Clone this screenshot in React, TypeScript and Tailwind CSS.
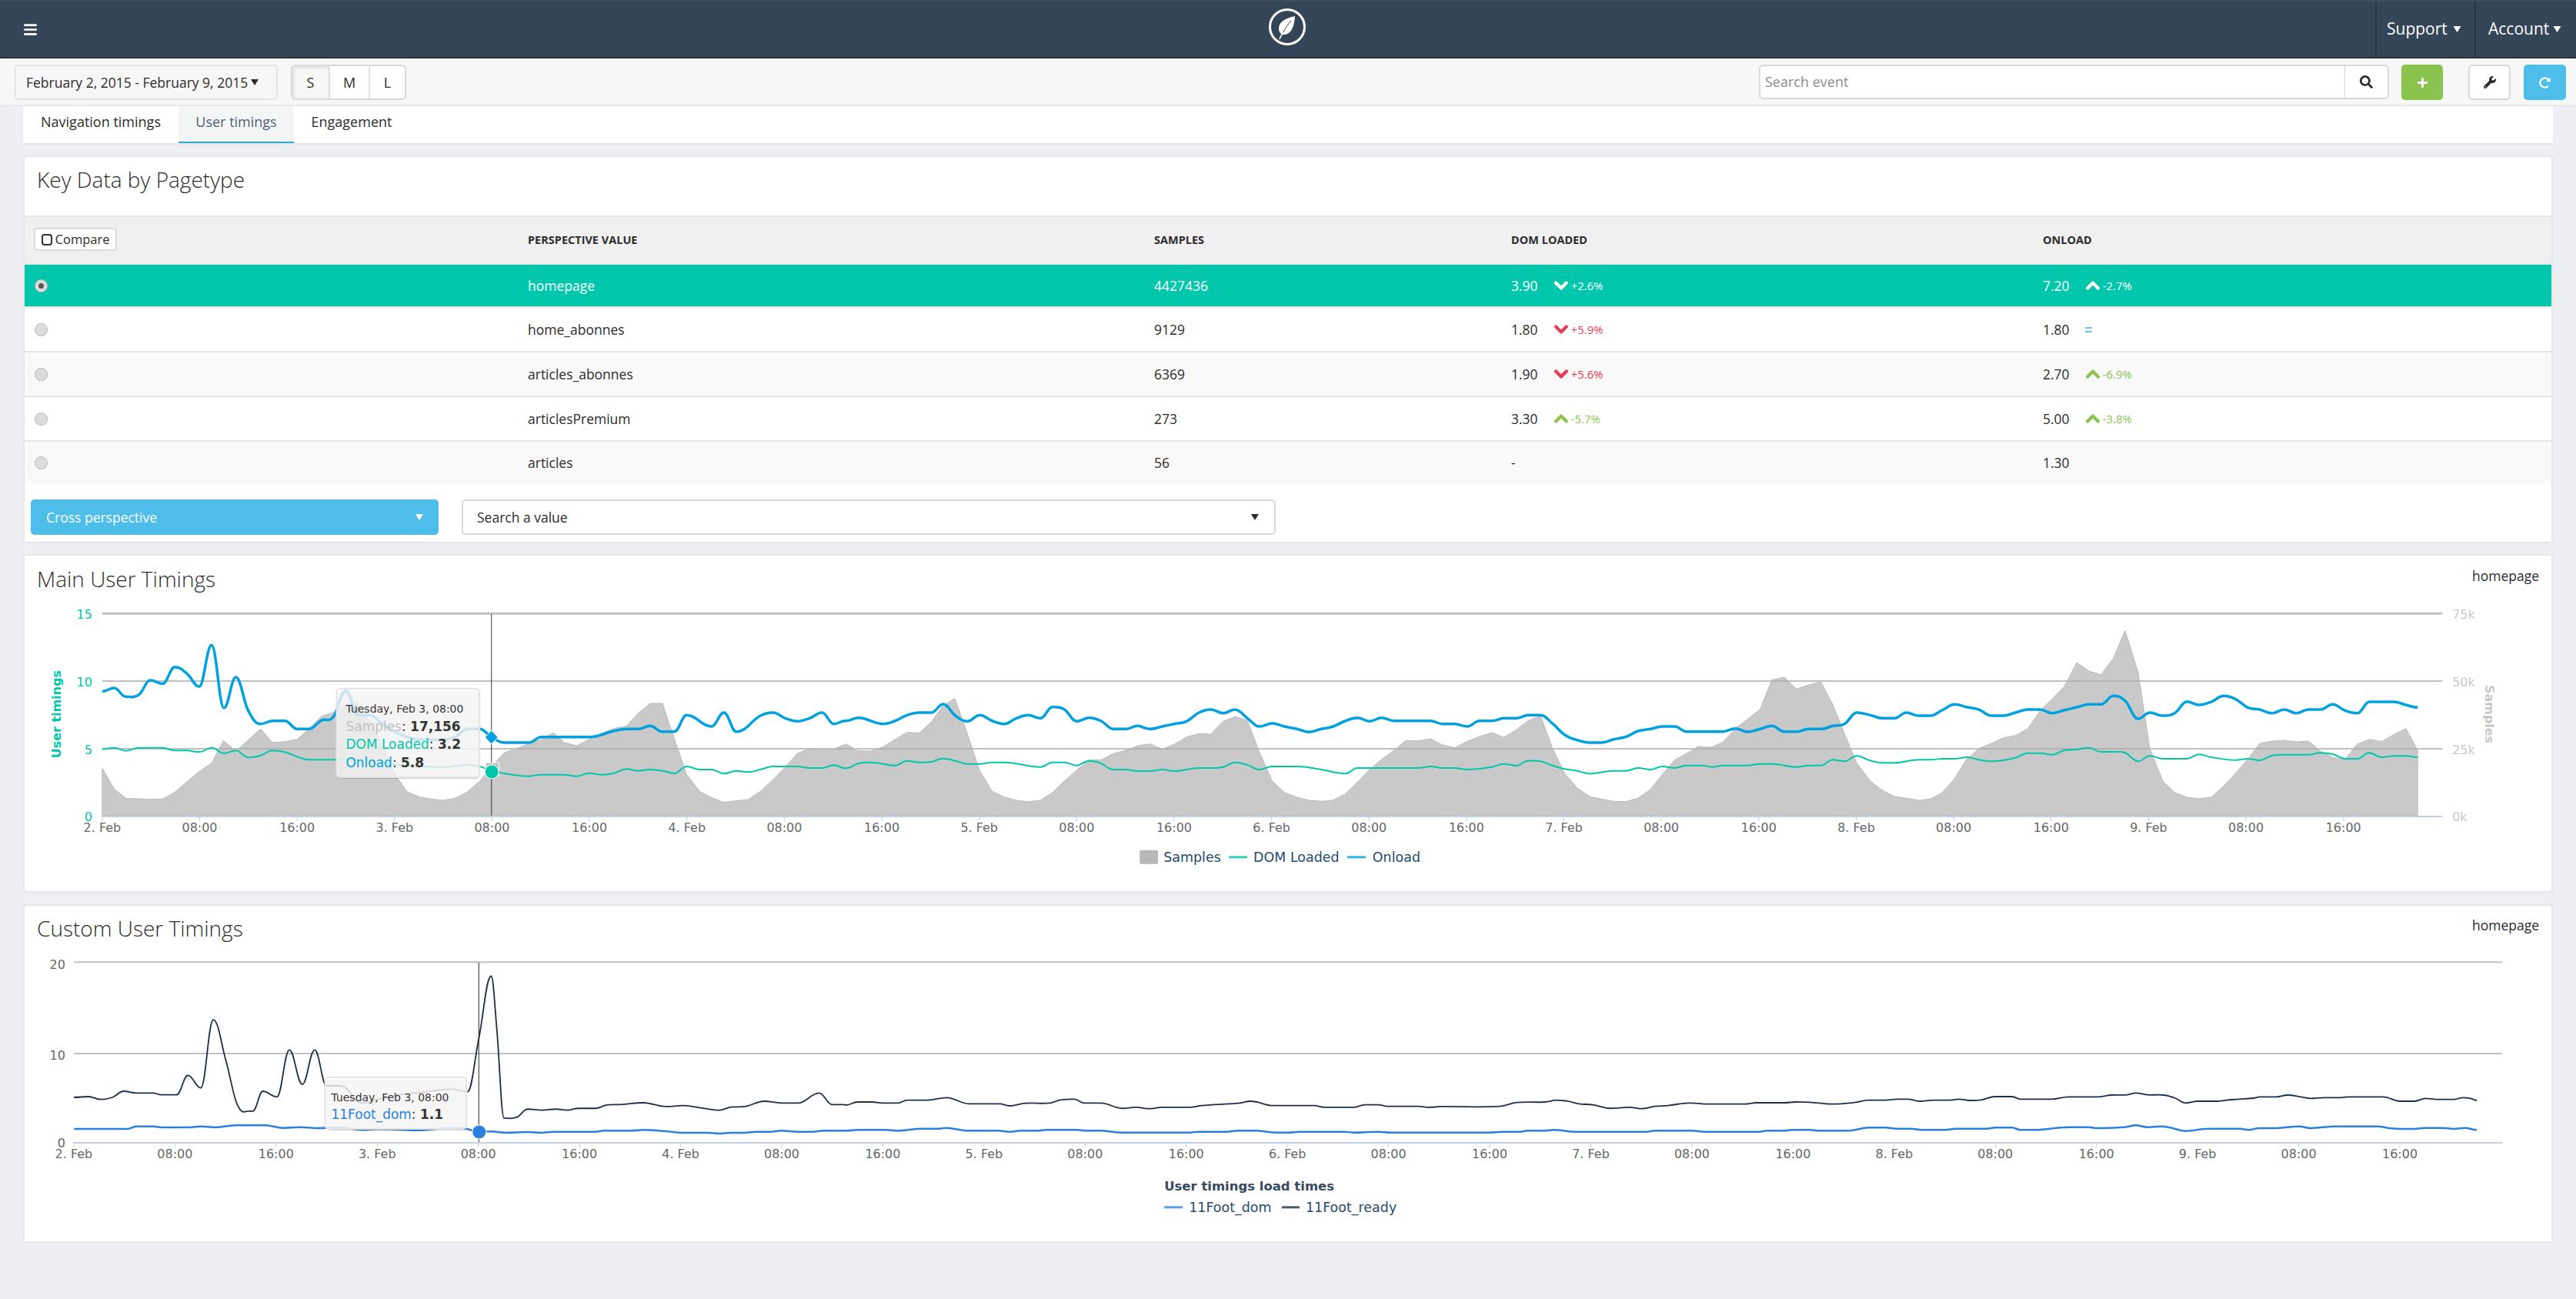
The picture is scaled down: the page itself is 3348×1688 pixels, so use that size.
import React from 'react';
import { FaBars, FaChevronDown, FaChevronUp, FaPlus, FaRedoAlt, FaSearch, FaWrench } from 'react-icons/fa';

type Pt = [number, number];

// Trace helpers: series were read off crops of the chart in three horizontal strips
const stitch = (a: Pt[], b: Pt[], c: Pt[], top: number): Pt[] => [
  ...a.map(([x, y]): Pt => [x * 0.7334, top + y / 3]).filter((p) => p[0] < 1100),
  ...b.map(([x, y]): Pt => [1100 + x * 0.7334, top + y / 3]).filter((p) => p[0] >= 1100 && p[0] < 2200),
  ...c.map(([x, y]): Pt => [2200 + x * 0.732, top + y / 3]).filter((p) => p[0] >= 2200),
];

const smooth = (p: Pt[]) => {
  const slope = (i: number) => {
    if (i === 0 || i === p.length - 1) return 0;
    const a = p[i - 1], b = p[i], c = p[i + 1];
    if ((b[1] - a[1]) * (c[1] - b[1]) <= 0) return 0;
    return (c[1] - a[1]) / (c[0] - a[0]);
  };
  let d = `M${p[0][0].toFixed(1)} ${p[0][1].toFixed(1)}`;
  for (let i = 0; i < p.length - 1; i++) {
    const dx = (p[i + 1][0] - p[i][0]) / 2.5;
    d += `C${(p[i][0] + dx).toFixed(1)} ${(p[i][1] + slope(i) * dx).toFixed(1)} ${(p[i + 1][0] - dx).toFixed(1)} ${(p[i + 1][1] - slope(i + 1) * dx).toFixed(1)} ${p[i + 1][0].toFixed(1)} ${p[i + 1][1].toFixed(1)}`;
  }
  return d;
};

const samples = stitch(
  [[180,835],[201,915],[222,953],[245,954],[265,956],[287,955],[309,928],[330,888],[352,848],[374,815],[395,727],[417,768],[439,725],[461,681],[482,735],[504,731],[526,722],[547,680],[569,632],[590,617],[612,585],[634,582],[655,650],[676,740],[697,850],[720,925],[742,947],[763,955],[785,960],[807,952],[828,927],[850,885],[870,830],[893,775],[915,758],[937,740],[959,722],[980,696],[1000,735],[1022,747],[1044,722],[1065,700],[1087,680],[1110,670],[1131,620],[1152,582],[1174,582],[1195,720],[1217,860],[1240,925],[1261,950],[1283,968],[1305,962],[1326,957],[1348,925],[1370,880],[1392,830],[1413,778],[1435,757],[1457,762],[1478,760],[1500,740],[1521,766]],
  [[0,740],[20,766],[44,768],[65,752],[87,722],[108,695],[130,697],[151,655],[172,590],[193,562],[215,700],[237,845],[259,925],[281,948],[302,960],[323,966],[345,960],[366,930],[387,885],[409,843],[431,802],[452,803],[474,778],[496,765],[517,748],[539,740],[561,760],[582,742],[604,713],[626,700],[647,702],[669,652],[690,634],[712,648],[733,770],[756,885],[778,930],[800,948],[821,960],[843,964],[864,960],[886,935],[907,890],[929,840],[950,800],[972,765],[993,727],[1015,728],[1037,720],[1058,744],[1080,755],[1102,730],[1124,711],[1146,696],[1167,715],[1189,685],[1210,650],[1232,630],[1254,760],[1275,855],[1297,912],[1319,945],[1340,955],[1362,964],[1384,965],[1405,952],[1427,918],[1448,860],[1470,803],[1491,778],[1513,750],[1535,753],[1556,733]],
  [[12,750],[36,753],[56,733],[78,680],[100,643],[122,605],[143,490],[165,480],[187,526],[208,510],[230,498],[251,585],[272,700],[294,815],[318,885],[340,922],[361,945],[382,952],[404,960],[425,955],[446,930],[468,875],[489,800],[511,758],[533,738],[554,717],[576,707],[598,680],[620,610],[641,565],[663,515],[685,423],[707,456],[728,470],[750,405],[771,297],[794,460],[815,760],[838,885],[859,930],[881,948],[902,954],[924,948],[946,905],[967,855],[989,800],[1010,738],[1032,729],[1054,726],[1075,732],[1097,729],[1118,768],[1140,793],[1162,800],[1184,740],[1205,722],[1227,731],[1249,703],[1270,680],[1291,765]],
  720
);

const onload = stitch(
  [[180,535],[201,522],[222,556],[245,548],[265,492],[287,505],[309,440],[330,465],[352,516],[374,354],[396,600],[417,480],[439,610],[461,662],[482,650],[504,650],[526,682],[547,682],[569,648],[590,635],[612,532],[634,628],[655,628],[676,660],[697,690],[720,712],[742,724],[785,724],[807,712],[828,682],[850,682],[870,712],[893,735],[915,735],[937,735],[959,713],[1000,713],[1044,713],[1087,690],[1110,682],[1131,682],[1152,670],[1174,692],[1195,692],[1217,628],[1261,672],[1283,618],[1305,693],[1348,630],[1370,618],[1392,640],[1413,652],[1435,640],[1457,618],[1478,662],[1498,650]],
  [[0,650],[22,638],[65,662],[87,650],[108,628],[130,618],[151,618],[172,585],[194,630],[215,652],[237,628],[259,650],[281,662],[302,640],[323,628],[345,640],[366,596],[387,605],[409,652],[431,638],[452,650],[474,682],[496,682],[517,670],[539,682],[561,672],[582,662],[604,652],[626,618],[647,606],[669,620],[690,606],[712,640],[733,672],[756,660],[778,672],[800,682],[821,694],[843,682],[864,672],[886,650],[907,638],[929,652],[950,638],[972,650],[993,650],[1037,650],[1058,662],[1080,662],[1102,672],[1124,650],[1146,650],[1167,640],[1189,640],[1210,628],[1232,628],[1254,662],[1275,705],[1297,725],[1319,735],[1340,735],[1362,722],[1384,712],[1405,690],[1427,682],[1448,672],[1470,672],[1491,692],[1513,692],[1535,692]],
  [[0,692],[56,692],[78,680],[100,693],[122,682],[143,670],[165,692],[187,692],[208,682],[230,682],[251,670],[272,662],[294,618],[318,628],[340,640],[361,640],[382,618],[404,630],[425,630],[446,608],[468,586],[489,596],[511,606],[533,630],[554,630],[576,618],[598,606],[620,606],[641,620],[663,608],[685,597],[707,586],[728,586],[750,553],[771,572],[794,642],[815,618],[838,630],[859,620],[881,575],[902,588],[924,576],[946,553],[967,565],[989,598],[1010,606],[1032,620],[1054,606],[1075,620],[1097,606],[1118,606],[1140,586],[1162,610],[1184,620],[1205,576],[1227,576],[1249,576],[1270,588],[1291,598]],
  720
);

const domLoaded = stitch(
  [[180,760],[201,755],[222,767],[245,755],[287,755],[309,766],[330,766],[352,772],[374,755],[396,777],[417,766],[439,793],[461,785],[482,766],[504,772],[526,790],[547,802],[590,802],[612,798],[655,806],[700,820],[740,828],[785,830],[828,823],[850,828],[870,845],[893,855],[937,866],[959,860],[1000,860],[1022,866],[1044,854],[1065,860],[1087,855],[1110,838],[1131,845],[1152,840],[1174,845],[1195,855],[1217,828],[1240,840],[1261,840],[1283,856],[1305,845],[1326,850],[1348,840],[1370,828],[1413,828],[1435,834],[1457,834],[1478,823],[1498,835]],
  [[0,835],[22,816],[44,812],[87,824],[108,806],[130,812],[151,810],[172,797],[194,806],[215,818],[237,818],[259,812],[281,812],[345,830],[366,812],[387,812],[409,824],[431,806],[452,816],[474,840],[496,840],[517,846],[539,846],[561,840],[582,846],[626,834],[647,834],[669,830],[690,812],[712,822],[733,840],[756,828],[800,828],[843,840],[886,856],[907,834],[950,834],[1015,834],[1037,828],[1058,834],[1080,834],[1102,840],[1146,830],[1167,818],[1189,825],[1210,806],[1232,808],[1254,825],[1275,838],[1297,845],[1319,856],[1362,845],[1384,845],[1405,834],[1427,840],[1448,828],[1470,834],[1491,824],[1513,824],[1535,830]],
  [[0,824],[20,824],[36,830],[56,824],[100,824],[122,818],[143,818],[187,830],[208,824],[230,824],[251,802],[272,808],[294,787],[318,805],[340,814],[361,814],[404,802],[425,802],[446,798],[468,798],[489,792],[511,802],[533,808],[554,804],[576,794],[598,776],[620,776],[641,782],[663,765],[685,762],[707,755],[728,771],[750,771],[771,775],[794,808],[815,787],[838,798],[881,798],[902,781],[924,792],[967,803],[989,798],[1010,804],[1032,786],[1054,782],[1097,782],[1118,775],[1140,780],[1162,798],[1184,798],[1205,775],[1227,792],[1249,787],[1270,787],[1291,792]],
  720
);

const stitch2 = (a: Pt[], b: Pt[], c: Pt[]) => stitch(a, b, c, 1170);

const footReady = stitch2(
  [[130,768],[155,765],[178,776],[198,768],[218,744],[240,751],[270,751],[285,758],[312,758],[332,682],[355,731],[377,465],[400,630],[420,798],[440,822],[447,822],[465,744],[490,766],[512,583],[535,717],[557,583],[578,723],[604,723],[640,790],[670,775],[700,760],[740,750],[800,736],[828,746],[848,540],[870,295],[880,500],[893,849],[915,846],[935,814],[960,818],[985,814],[1005,818],[1025,811],[1055,811],[1075,798],[1100,796],[1140,789],[1180,804],[1210,800],[1240,808],[1275,818],[1295,806],[1320,804],[1355,783],[1385,790],[1415,790],[1452,751],[1475,796],[1495,796]],
  [[0,798],[20,786],[45,786],[65,790],[92,790],[108,779],[145,779],[178,769],[218,793],[272,793],[290,801],[318,791],[362,790],[380,778],[405,775],[422,790],[452,790],[490,811],[515,807],[538,812],[560,807],[610,807],[630,800],[695,791],[718,783],[758,800],[830,800],[850,807],[900,807],[920,797],[945,797],[960,803],[1015,803],[1035,807],[1055,804],[1160,803],[1190,788],[1240,786],[1260,779],[1280,783],[1300,793],[1325,797],[1355,811],[1390,807],[1412,812],[1435,803],[1458,800],[1495,790],[1520,794]],
  [[0,790],[25,794],[95,794],[115,789],[165,789],[185,786],[210,787],[250,794],[290,788],[315,779],[345,779],[365,775],[385,775],[405,783],[430,779],[460,779],[475,775],[495,780],[515,778],[540,765],[570,765],[585,775],[640,775],[670,766],[725,766],[745,759],[775,758],[790,751],[810,758],[840,759],[860,771],[878,790],[900,783],[935,783],[960,777],[1000,771],[1010,766],[1040,766],[1060,759],[1085,767],[1100,772],[1125,769],[1150,769],[1170,766],[1230,766],[1260,783],[1285,783],[1305,772],[1325,776],[1355,776],[1372,769],[1385,772],[1396,780]]
);

const footDom = stitch2(
  [[130,891],[225,891],[240,881],[270,881],[285,885],[335,885],[355,881],[380,885],[420,877],[470,877],[500,887],[530,884],[560,888],[600,885],[640,895],[670,892],[700,893],[740,896],[790,889],[825,890],[848,903],[870,901],[895,906],[935,903],[960,906],[980,902],[1055,902],[1070,898],[1120,898],[1140,895],[1180,900],[1210,906],[1255,906],[1275,909],[1295,906],[1320,906],[1340,902],[1365,902],[1385,898],[1415,902],[1440,902],[1460,898],[1490,898]],
  [[0,898],[20,895],[70,895],[90,898],[135,890],[165,890],[178,887],[215,898],[270,898],[290,902],[310,898],[340,898],[355,895],[410,895],[425,898],[450,898],[490,905],[610,905],[625,902],[675,902],[695,898],[725,898],[765,905],[785,905],[805,902],[885,902],[900,905],[945,902],[965,905],[1140,905],[1165,902],[1195,902],[1210,898],[1240,898],[1255,895],[1295,902],[1420,902],[1435,898],[1505,898],[1520,902]],
  [[0,898],[25,902],[120,902],[135,898],[165,898],[180,895],[210,895],[225,898],[280,898],[315,886],[345,886],[365,890],[390,890],[410,895],[450,895],[470,890],[525,890],[540,886],[570,886],[585,895],[610,895],[670,884],[705,884],[720,888],[770,884],[790,877],[810,884],[835,881],[855,888],[878,899],[920,890],[975,890],[990,895],[1010,888],[1040,888],[1080,881],[1100,888],[1145,881],[1220,881],[1240,888],[1265,891],[1285,891],[1305,887],[1335,887],[1355,891],[1375,887],[1396,895]]
);

const xLabels = ['2. Feb','08:00','16:00','3. Feb','08:00','16:00','4. Feb','08:00','16:00','5. Feb','08:00','16:00','6. Feb','08:00','16:00','7. Feb','08:00','16:00','8. Feb','08:00','16:00','9. Feb','08:00','16:00'];

const chartFont = { fontFamily: '"DejaVu Sans", sans-serif' };

const XAxis = ({ x0, x1, step, y }: { x0: number; x1: number; step: number; y: number }) => (
  <g>
    <line x1={x0} x2={x1} y1={y + 1} y2={y + 1} stroke="#c0d0e0" strokeWidth={2} />
    {xLabels.map((label, i) => (
      <g key={i}>
        <line x1={x0 + i * step} x2={x0 + i * step} y1={y} y2={y + 7} stroke="#c0d0e0" />
        <text x={x0 + i * step} y={y + 21} textAnchor="middle" fontSize={16} fill="#666">{label}</text>
      </g>
    ))}
  </g>
);

const MainChart = () => (
  <svg viewBox="31 770 3288 386" className="block w-full h-[386px]" style={chartFont}>
    {[[797, 3], [885, 2], [973, 2]].map(([y, w]) => (
      <line key={y} x1={132} x2={3177} y1={y} y2={y} stroke="#c0c0c0" strokeWidth={w} />
    ))}
    <polygon points={`132,1060 ${samples.map((p) => p.join(',')).join(' ')} 3145,1060`} fill="#aaaaaa" fillOpacity={0.635} stroke="#bbbbbb" />
    <XAxis x0={132} x1={3177} step={126.8} y={1060} />

    {[['15', 804], ['10', 892], ['5', 980], ['0', 1067]].map(([t, y]) => (
      <text key={t} x={119} y={y} textAnchor="end" fontSize={16} fill="#00c6ac">{t}</text>
    ))}
    {[['75k', 804], ['50k', 892], ['25k', 980], ['0k', 1067]].map(([t, y]) => (
      <text key={t} x={3190} y={y} fontSize={16} fill="#c8c8c8">{t}</text>
    ))}
    <text transform="translate(78 928) rotate(-90)" textAnchor="middle" fontSize={16} fontWeight={700} fill="#00c6ac">User timings</text>
    <text transform="translate(3233 928) rotate(90)" textAnchor="middle" fontSize={16} fontWeight={700} fill="#c8c8c8">Samples</text>

    <path d={smooth(domLoaded)} fill="none" stroke="#00c6ac" strokeWidth={2} />
    <path d={smooth(onload)} fill="none" stroke="#00a1de" strokeWidth={3.5} />

    <line x1={638.5} x2={638.5} y1={798} y2={1060} stroke="#333" />
    <rect x={631} y={991} width={17} height={17} fill="#c0c0c0" stroke="#fff" />
    <polygon points="638.5,949 647,958 638.5,967 630,958" fill="#00a1de" stroke="#fff" />
    <circle cx={639} cy={1003} r={9} fill="#00c6ac" stroke="#fff" />

    <g>
      <rect x={439} y={898} width={184} height={114} rx={5} fill="#000" fillOpacity={0.18} />
      <rect x={437} y={895} width={186} height={115} rx={5} fill="#fff" fillOpacity={0.78} stroke="#e4e4e4" strokeWidth={2} />
      <text x={449} y={926} fontSize={14} fill="#333">Tuesday, Feb 3, 08:00</text>
      <text x={449} y={950} fontSize={17}><tspan fill="#c0c0c0">Samples</tspan><tspan fill="#333">: </tspan><tspan fill="#333" fontWeight={700}>17,156</tspan></text>
      <text x={449} y={973} fontSize={17}><tspan fill="#00c6ac">DOM Loaded</tspan><tspan fill="#333">: </tspan><tspan fill="#333" fontWeight={700}>3.2</tspan></text>
      <text x={449} y={997} fontSize={17}><tspan fill="#00a1de">Onload</tspan><tspan fill="#333">: </tspan><tspan fill="#333" fontWeight={700}>5.8</tspan></text>
    </g>

    <g fontSize={17.5} fill="#274b6d">
      <rect x={1482} y={1105} width={24} height={18} rx={2} fill="#b8b8b8" />
      <text x={1513} y={1120}>Samples</text>
      <line x1={1598} x2={1622} y1={1114} y2={1114} stroke="#33d1bd" strokeWidth={3} />
      <text x={1630} y={1120}>DOM Loaded</text>
      <line x1={1752} x2={1776} y1={1114} y2={1114} stroke="#33b4e7" strokeWidth={3} />
      <text x={1785} y={1120}>Onload</text>
    </g>
  </svg>
);

const CustomChart = () => (
  <svg viewBox="31 1225 3288 386" className="block w-full h-[386px]" style={chartFont}>
    {[1250, 1369].map((y) => (
      <line key={y} x1={95} x2={3255} y1={y} y2={y} stroke="#c0c0c0" strokeWidth={2} />
    ))}
    <XAxis x0={95} x1={3255} step={131.6} y={1484} />
    {[['20', 1259], ['10', 1377], ['0', 1491]].map(([t, y]) => (
      <text key={t} x={84} y={y} textAnchor="end" fontSize={16} fill="#666">{t}</text>
    ))}
    <path d={smooth(footDom)} fill="none" stroke="#2a80de" strokeWidth={2.5} />
    <path d={smooth(footReady)} fill="none" stroke="#1c2f45" strokeWidth={1.8} />
    <line x1={622} x2={622} y1={1251} y2={1484} stroke="#222" />
    <g>
      <rect x={424} y={1403} width={182} height={66} rx={5} fill="#000" fillOpacity={0.18} />
      <rect x={422} y={1400} width={184} height={67} rx={5} fill="#fff" fillOpacity={0.8} stroke="#e4e4e4" strokeWidth={2} />
      <text x={430} y={1431} fontSize={14} fill="#333">Tuesday, Feb 3, 08:00</text>
      <text x={430} y={1454} fontSize={17}><tspan fill="#2a80de">11Foot_dom</tspan><tspan fill="#333">: </tspan><tspan fill="#333" fontWeight={700}>1.1</tspan></text>
    </g>
    <circle cx={622.5} cy={1471} r={9} fill="#2a80de" stroke="#fff" />
    <text x={1514} y={1547} fontSize={16.5} fontWeight={700} fill="#34495e">User timings load times</text>
    <g fontSize={17.5} fill="#274b6d">
      <line x1={1514} x2={1538} y1={1569} y2={1569} stroke="#5b9ee8" strokeWidth={3} />
      <text x={1546} y={1575}>11Foot_dom</text>
      <line x1={1667} x2={1690} y1={1569} y2={1569} stroke="#4a5a6e" strokeWidth={3} />
      <text x={1698} y={1575}>11Foot_ready</text>
    </g>
  </svg>
);

const Caret = ({ className }: { className: string }) => (
  <svg viewBox="0 0 10 8" className={className} fill="currentColor"><path d="M0 0h10L5 8z" /></svg>
);

const Radio = ({ checked }: { checked?: boolean }) => (
  <span className="w-[17px] h-[17px] rounded-full bg-[#dcdcdc] border border-[#b5b5b5] flex items-center justify-center">
    {checked && <span className="w-[7px] h-[7px] rounded-full bg-[#555]" />}
  </span>
);

const Delta = ({ dir, tone, text }: { dir: 'up' | 'down'; tone: string; text: string }) => (
  <span className={`inline-flex items-center gap-[3px] ml-[20px] text-[15px] ${tone}`}>
    {dir === 'up'
      ? <FaChevronUp size={20} stroke="currentColor" strokeWidth={30} />
      : <FaChevronDown size={20} stroke="currentColor" strokeWidth={30} />}
    {text}
  </span>
);

const rowGrid = 'grid grid-cols-[654px_814px_464px_691px_1fr] items-center';

const rows = [
  { name: 'homepage', n: '4427436', dom: '3.90', domDelta: { dir: 'down', tone: 'text-white', text: '+2.6%' }, on: '7.20', onDelta: { dir: 'up', tone: 'text-white', text: '-2.7%' }, bg: 'bg-[#00c6ac] text-white h-[56px]', checked: true },
  { name: 'home_abonnes', n: '9129', dom: '1.80', domDelta: { dir: 'down', tone: 'text-[#e63e57]', text: '+5.9%' }, on: '1.80', eq: true, bg: 'bg-white h-[58px]' },
  { name: 'articles_abonnes', n: '6369', dom: '1.90', domDelta: { dir: 'down', tone: 'text-[#e63e57]', text: '+5.6%' }, on: '2.70', onDelta: { dir: 'up', tone: 'text-[#8bc34f]', text: '-6.9%' }, bg: 'bg-[#f9f9f9] h-[58px]' },
  { name: 'articlesPremium', n: '273', dom: '3.30', domDelta: { dir: 'up', tone: 'text-[#8bc34f]', text: '-5.7%' }, on: '5.00', onDelta: { dir: 'up', tone: 'text-[#8bc34f]', text: '-3.8%' }, bg: 'bg-white h-[58px]' },
  { name: 'articles', n: '56', dom: '-', on: '1.30', bg: 'bg-[#f9f9f9] h-[54px]', last: true },
];

const Card = ({ className, children }: { className: string; children: React.ReactNode }) => (
  <section className={`mx-[30px] bg-white rounded-[4px] border-2 border-[#e6e6e8] ${className}`}>{children}</section>
);

export default function App() {
  return (
    <div className="min-h-[1688px] bg-[#eeeff4] text-[#2c2c2c] font-['Open_Sans',sans-serif]">
      {/* Navbar */}
      <header className="relative h-[76px] bg-[#344557] border-t-2 border-t-[#3d4f62] border-b-2 border-b-[#263545] flex items-center justify-between text-white">
        <FaBars size={19} className="ml-[30px]" />
        <svg viewBox="0 0 50 50" className="absolute left-[1648px] top-[8px] w-[50px] h-[50px]">
          <circle cx="25" cy="25" r="22.5" fill="none" stroke="#fff" strokeWidth="3" />
          <path d="M35 11C26 13 14 17 14 27c0 4 2 7 5 8 9 1 15-7 16-24z" fill="#fff" />
          <path d="M30 17C26 22 22 27 20 32" fill="none" stroke="#344557" strokeWidth="1" />
          <path d="M20 32c-2 3-4 6-5 9" fill="none" stroke="#fff" strokeWidth="1.5" />
        </svg>
        <nav className="flex h-full text-[21px]">
          <a className="w-[129px] border-l-2 border-[#263545] flex items-center pl-[13px] gap-[7px]">Support <Caret className="w-[11px] h-[8px]" /></a>
          <a className="w-[132px] border-l-2 border-[#263545] flex items-center pl-[16px] gap-[5px]">Account <Caret className="w-[11px] h-[8px]" /></a>
        </nav>
      </header>

      {/* Toolbar */}
      <div className="h-[62px] bg-[#f7f7f7] border-b-2 border-[#e8e8e8] flex items-start pt-[8px] pl-[19px] pr-[13px] text-[18px]">
        <button className="h-[46px] w-[342px] bg-[#f7f7f7] border-2 border-[#e4e4e4] rounded-[5px] flex items-center pl-[13px] gap-[4px] whitespace-nowrap text-[17.5px]">
          February 2, 2015 - February 9, 2015 <Caret className="w-[10px] h-[8px]" />
        </button>
        <div className="ml-[17px] h-[46px] w-[150px] flex border-2 border-[#d8d8d8] rounded-[6px] bg-white overflow-hidden">
          <span className="w-[47px] flex items-center justify-center bg-[#f7f7f7] shadow-[inset_2px_2px_4px_#dcdcdc]">S</span>
          <span className="w-[54px] flex items-center justify-center border-x-2 border-[#e0e0e0]">M</span>
          <span className="flex-1 flex items-center justify-center">L</span>
        </div>
        <div className="ml-auto h-[45px] w-[819px] flex border-2 border-[#d8d8d8] rounded-[5px] bg-white">
          <span className="flex-1 flex items-center pl-[6px] text-[18px] text-[#8c8c8c]">Search event</span>
          <span className="w-[56px] flex items-center justify-center border-l border-[#d8d8d8]"><FaSearch size={17} /></span>
        </div>
        <button className="ml-[16px] h-[46px] w-[54px] rounded-[5px] bg-[#8bc34f] text-white flex items-center justify-center"><FaPlus size={15} /></button>
        <button className="ml-[33px] h-[46px] w-[55px] rounded-[5px] bg-white border-2 border-[#d8d8d8] flex items-center justify-center"><FaWrench size={16} /></button>
        <button className="ml-[17px] h-[46px] w-[55px] rounded-[5px] bg-[#4dbde9] text-white flex items-center justify-center"><FaRedoAlt size={15} /></button>
      </div>

      {/* Tabs */}
      <div className="mx-[30px] h-[50px] bg-white border-b-2 border-[#e6e6e8] flex text-[18px]">
        <a className="w-[202px] flex items-center justify-center pb-[8px] whitespace-nowrap">Navigation timings</a>
        <a className="w-[150px] flex items-center justify-center pb-[6px] bg-[#f4f6f6] text-[#4d6275] border-b-2 border-[#2ba3dc] whitespace-nowrap">User timings</a>
        <a className="w-[150px] flex items-center justify-center pb-[8px]">Engagement</a>
      </div>

      {/* Key data */}
      <Card className="mt-[14px] h-[504px]">
        <h2 className="h-[76px] pl-[16px] pt-[8px] text-[28px] font-light">Key Data by Pagetype</h2>
        <div className={`${rowGrid} h-[64px] bg-[#f0f0f0] border-y-2 border-[#e6e6e8]`}>
          <div className="pl-[12px]">
            <button className="w-[108px] h-[30px] mb-[2px] bg-white border-2 border-[#dcdcdc] rounded-[4px] flex items-center justify-center gap-[4px] text-[16.5px]">
              <span className="w-[14px] h-[15px] rounded-[4px] border-2 border-[#333]" />
              Compare
            </button>
          </div>
          {['PERSPECTIVE VALUE', 'SAMPLES', 'DOM LOADED', 'ONLOAD'].map((h) => (
            <div key={h} className="text-[14.5px] font-bold">{h}</div>
          ))}
        </div>
        {rows.map((r) => (
          <div key={r.name} className={`${rowGrid} ${r.bg} text-[17.5px] ${r.last ? '' : 'border-b-2 border-[#e6e6e8]'}`}>
            <div className="pl-[13px]"><Radio checked={r.checked} /></div>
            <div>{r.name}</div>
            <div>{r.n}</div>
            <div className="flex items-center">{r.dom}{r.domDelta && <Delta {...(r.domDelta as any)} />}</div>
            <div className="flex items-center">
              {r.on}
              {r.onDelta && <Delta {...(r.onDelta as any)} />}
              {r.eq && <span className="ml-[20px] w-[9px] h-[7px] border-y-2 border-[#6cc5ee]" />}
            </div>
          </div>
        ))}
        <div className="flex pt-[21px] pl-[8px] gap-[30px]">
          <button className="w-[530px] h-[46px] bg-[#4dbde9] rounded-[5px] text-white text-[17.5px] flex items-center justify-between pl-[20px] pr-[20px]">
            Cross perspective <Caret className="w-[10px] h-[8px]" />
          </button>
          <button className="w-[1058px] h-[46px] bg-white border-2 border-[#d8d8d8] rounded-[5px] text-[17.5px] flex items-center justify-between pl-[18px] pr-[20px]">
            Search a value <Caret className="w-[10px] h-[8px]" />
          </button>
        </div>
      </Card>

      {/* Main user timings */}
      <Card className="mt-[14px] h-[440px]">
        <div className="h-[48px] flex items-center justify-between pl-[16px] pr-[16px]">
          <h2 className="pt-[12px] text-[28px] font-light">Main User Timings</h2>
          <span className="pt-[4px] text-[17.5px]">homepage</span>
        </div>
        <MainChart />
      </Card>

      {/* Custom user timings */}
      <Card className="mt-[15px] h-[440px]">
        <div className="h-[48px] flex items-center justify-between pl-[16px] pr-[16px]">
          <h2 className="pt-[10px] text-[28px] font-light">Custom User Timings</h2>
          <span className="pt-[3px] text-[17.5px]">homepage</span>
        </div>
        <CustomChart />
      </Card>
    </div>
  );
}
